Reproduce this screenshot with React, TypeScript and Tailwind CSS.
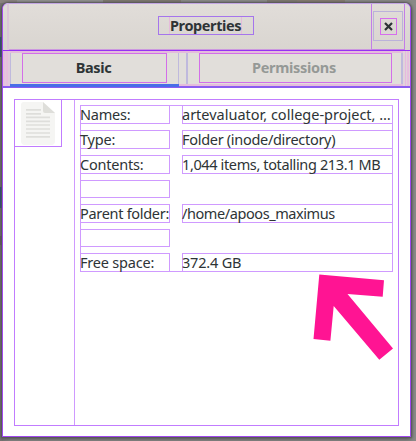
import type { ReactNode } from "react";

type Row = { label: string; value: string; labelTracking?: string; valueTracking?: string };

const rows: Row[] = [
  { label: "Names:", value: "artevaluator, college-project, …", valueTracking: "tracking-[0px]" },
  { label: "Type:", value: "Folder (inode/directory)", valueTracking: "tracking-[-0.3px]" },
  { label: "Contents:", value: "1,044 items, totalling 213.1 MB", valueTracking: "tracking-[-0.37px]" },
  { label: "", value: "" },
  {
    label: "Parent folder:",
    value: "/home/apoos_maximus",
    labelTracking: "tracking-[-0.3px]",
    valueTracking: "tracking-[-0.42px]",
  },
  { label: "", value: "" },
  { label: "Free space:", value: "372.4 GB", valueTracking: "tracking-[-0.2px]" },
];

function Backdrop({ children }: { children: ReactNode }) {
  return (
    <div className="h-[441px] w-[416px] overflow-hidden bg-[#8b8b89] bg-[linear-gradient(90deg,#6b6a69_0,#80807e_5px,#8b8b89_10px)] font-['Noto_Sans','Open_Sans',sans-serif] text-[#2e3436]">
      <div className="flex h-[3px]">
        <div className="w-[17px] bg-[#8a8380]" />
        <div className="w-[86px] bg-[#929291]" />
        <div className="w-[78px] bg-[#7e7970]" />
        <div className="w-[86px] bg-[#8b8b89]" />
        <div className="w-[30px] bg-[#7e7970]" />
        <div className="w-[48px] bg-[#857b70]" />
        <div className="flex-1 bg-[#898987]" />
      </div>
      <div className="flex">
        <div className="flex h-[438px] w-0.5 shrink-0 flex-col bg-[#777573]">
          <div className="mt-[34px] h-[20px] bg-[#174783]" />
          <div className="mt-[130px] h-[21px] bg-[#174783]" />
          <div className="mt-[28px] h-[9px] bg-[#66595a]" />
        </div>
        {children}
      </div>
    </div>
  );
}

function DocumentIcon() {
  return (
    <svg width="48" height="48" viewBox="0 0 48 48" className="block">
      <path d="M10 3h19l12 11v28a4 4 0 0 1-4 4H11a4 4 0 0 1-4-4V6a3 3 0 0 1 3-3Z" fill="#f5f5f3" />
      <path d="M29 3l12 11H31a2 2 0 0 1-2-2Z" fill="#dededa" />
      <path
        d="M12 10.9h15M12 14.9h15M12 18.4h24M12 22.4h24M12 26h24M12 30h24M12 34h24M12 37.8h24"
        stroke="#dededb"
        strokeWidth="1.7"
      />
    </svg>
  );
}

function Header() {
  return (
    <div className="flex h-[47px] justify-between rounded-t-[6px] border-t border-[#c3a6e4] bg-linear-to-b from-[#e1ddd9] to-[#d9d5d0]">
      <div className="h-[46px] w-[6px] border-r-2 border-[#dcc6da]" />
      <div className="flex flex-1 justify-center border-b border-[#cc98df] pl-[31px] pt-[12px]">
        <div className="flex h-[19px] w-[96px] justify-center border border-[#a575ec]">
          <div className="h-[17px] w-[73px] whitespace-nowrap border-x border-[#e5bbdc] text-center text-[14.5px] font-bold leading-[17px] tracking-[-0.4px]">
            Properties
          </div>
        </div>
      </div>
      <div className="flex h-[46px] w-[34px] justify-center border border-t-0 border-[#c37de8] pt-[7px]">
        <div className="flex h-[30px] w-[30px] items-center justify-center border border-[#bbb2da]">
          <div className="flex h-[17px] w-[17px] items-center justify-center border border-[#d66eed]">
            <svg width="9" height="9" viewBox="0 0 9 9">
              <path d="M1 1l7 7M8 1L1 8" stroke="#2e3436" strokeWidth="2.2" />
            </svg>
          </div>
        </div>
      </div>
      <div className="w-[5px]" />
    </div>
  );
}

function Tabs() {
  return (
    <div className="flex h-[38px] border-b-2 border-t border-b-[#8b5cf0] border-t-[#9632f3] bg-[#e4bcdc] text-[14.5px] font-bold">
      <div className="flex h-[35px] w-[7px] bg-[#e1c9dc]">
        <div className="w-[2px] bg-[#e7bede]" />
        <div className="ml-px w-[2px] bg-[#e7bede]" />
      </div>
      <div className="flex h-[36px] w-[169px] flex-col border-b-[3px] border-[#496de8] bg-[#e1deda]">
        <div className="h-[2px] shrink-0 bg-[#e4bcdc]" />
        <div className="flex h-[31px] border-x border-[#bfb9dd]">
          <div className="ml-[11px] h-[30px] w-[145px] border border-[#d36ee9] pr-0.5 text-center leading-[27px] tracking-[-0.35px]">
            Basic
          </div>
        </div>
      </div>
      <div className="h-[33px] w-[7px] border-t-2 border-[#e4bcdc] bg-[#e1deda]" />
      <div className="flex h-[33px] w-[217px] border-t-2 border-[#e4bcdc] bg-[#e1deda]">
        <div className="w-[2px] bg-[#bfb9dd]" />
        <div className="ml-[11px] h-[30px] w-[193px] border border-[#d36ee9] pr-[3px] text-center leading-[27px] tracking-[-0.3px] text-[#959996]">
          Permissions
        </div>
        <div className="ml-[9px] w-[2px] bg-[#bfb9dd]" />
      </div>
      <div className="flex h-[35px] flex-1 bg-[#e1d3db]">
        <div className="ml-[2px] w-px bg-[#e7b8de]" />
        <div className="ml-px w-[2px] bg-[#e7bede]" />
      </div>
    </div>
  );
}

function Details() {
  return (
    <div className="flex-1 pl-[5px] pt-[5px]">
      <div className="flex h-[167px] w-[313px] flex-col justify-between border border-[#cf9aff]">
        {rows.map((row, i) => (
          <div
            key={i}
            className={
              "-mx-px flex justify-between first:-mt-px last:-mb-px text-[14.5px] leading-[16px] " +
              (row.label ? "h-[19px]" : "h-[18px]")
            }
          >
            <div
              className={
                "w-[90px] whitespace-nowrap border border-[#cf9aff] " + (row.labelTracking ?? "tracking-[-0.2px]")
              }
            >
              <div className="-ml-px">{row.label}</div>
            </div>
            {row.label && (
              <div className={"w-[211px] whitespace-nowrap border border-[#cf9aff] " + row.valueTracking}>
                <div className="-ml-px">{row.value}</div>
              </div>
            )}
          </div>
        ))}
      </div>
    </div>
  );
}

export default function App() {
  return (
    <Backdrop>
      <div className="relative h-[434px] w-[409px] shrink-0 rounded-t-[6px] border-x border-b border-[#9f48ed] bg-white shadow-[0_0_2px_1px_#555,0_2px_5px_#555]">
        <Header />
        <Tabs />
        <div className="pl-[11px] pt-[11px]">
          <div className="flex h-[327px] w-[385px] border border-[#c17cff]">
            <div className="w-[59px]">
              <div className="-ml-px -mt-px h-[48px] w-[48px] border border-[#c17cff]">
                <div className="-ml-px -mt-px">
                  <DocumentIcon />
                </div>
              </div>
            </div>
            <div className="flex flex-1 border-l border-[#cf9aff]">
              <Details />
            </div>
          </div>
        </div>
        <svg className="absolute left-[310px] top-[269px]" width="84" height="90" viewBox="313 272 84 90">
          <path
            d="M319.3 274.5L384 280.2L382.7 296.7L347.5 294L393 348.5L379.3 359.7L333.7 306L330.4 340.7L313.5 339Z"
            fill="#ff1493"
          />
        </svg>
      </div>
    </Backdrop>
  );
}
